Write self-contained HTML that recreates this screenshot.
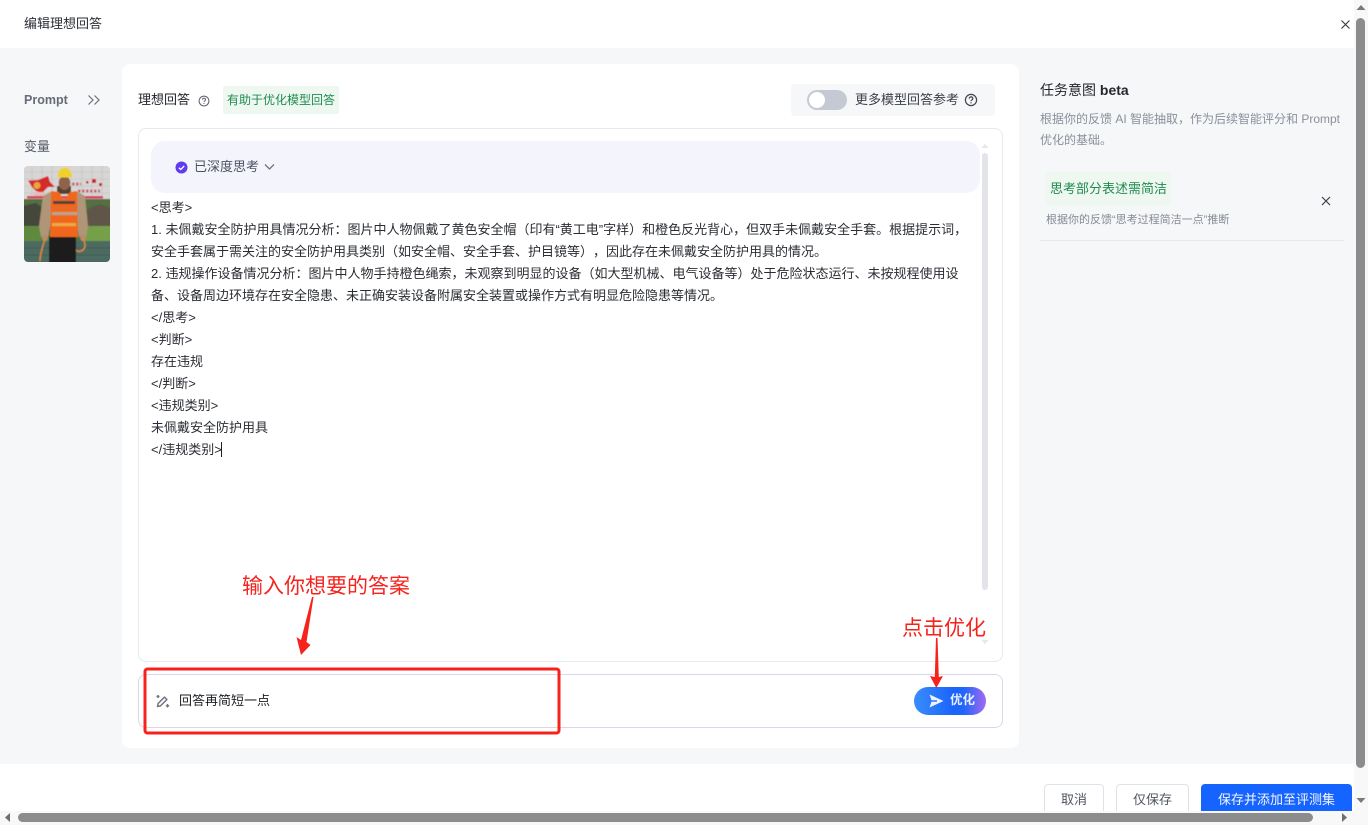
<!DOCTYPE html>
<html lang="zh"><head><meta charset="utf-8"><title>编辑理想回答</title>
<style>
html,body{margin:0;padding:0;width:1368px;height:825px;overflow:hidden;background:#fff}
body{position:relative;font-family:"Liberation Sans","Noto Sans CJK SC",sans-serif;font-size:13px;color:#1c1f23;text-spacing-trim:space-all;font-feature-settings:"palt" 0,"chws" 0,"halt" 0}
.a{position:absolute;white-space:nowrap}
.t{position:absolute;white-space:nowrap;left:151px;line-height:22px;height:22px;font-size:13px;color:#2a2d33}
.btn{position:absolute;top:784px;height:32px;box-sizing:border-box;border:1px solid #dfe2e8;border-radius:4px;background:#fff;text-align:center;line-height:29px;color:#4f5560;font-size:13px}
</style></head><body>

<div class="a" style="left:0;top:48px;width:1354px;height:716px;background:#f6f7f9"></div>
<div class="a" style="left:24px;top:15px;line-height:18px;color:#2b2f36">编辑理想回答</div>
<svg class="a" style="left:1340px;top:19px" width="11" height="11" viewBox="0 0 11 11"><path d="M1.500 1.500l8 8M9.500 1.500l-8 8" stroke="#3a3f4a" stroke-width="1.200" fill="none"/></svg>

<div class="a" style="left:24px;top:91px;line-height:18px;font-size:12.500px;font-weight:700;color:#666b76">Prompt</div>
<svg class="a" style="left:87px;top:94px" width="14" height="12" viewBox="0 0 14 12"><path d="M1.500 1.500L6 6l-4.500 4.500M7.500 1.500L12 6l-4.500 4.500" stroke="#6b707b" stroke-width="1.200" fill="none"/></svg>
<div class="a" style="left:24px;top:138px;line-height:18px;color:#565b66">变量</div>

<svg class="a" style="left:24px;top:166px;border-radius:4px" width="86" height="96" viewBox="0 0 86 96">
<defs><filter id="b" x="-5%" y="-5%" width="110%" height="110%"><feGaussianBlur stdDeviation=".4"/></filter></defs>
<rect width="86" height="96" fill="#d8d6d5"/>
<g filter="url(#b)">
<rect x="-2" y="-2" width="90" height="100" fill="#d8d6d5"/>
<path d="M-2 6h90M-2 13h90M-2 20h90M-2 27h90M8 0v32M18 0v32M28 0v32M58 0v32M68 0v32M78 0v32" stroke="#bfbebe" stroke-width=".6"/>
<path d="M4 14.500L14 14 24 10 26 16 31 21 24 21 18 27 12 25 8 21z" fill="#d62b2b"/>
<circle cx="13" cy="19.500" r="3.500" fill="#e8a53c"/>
<rect x="3" y="30" width="76" height="2.600" fill="#d8415e"/>
<rect x="10" y="26" width="11" height="4" fill="#e4bcbc"/>
<path d="M48 18h9M54 25h22" stroke="#c65a68" stroke-width="2.800" stroke-dasharray="2.500 1.500"/>
<rect x="62" y="15" width="2.500" height="2.500" fill="#c22"/><rect x="68" y="13" width="4" height="4" fill="#c22"/><rect x="75" y="17" width="3" height="3" fill="#c22"/>
<rect x="-2" y="33" width="90" height="43" fill="#55703f"/>
<path d="M-2 40L12 37 22 44V62H-2z" fill="#45473a"/>
<path d="M62 44L75 38 88 42V60H62z" fill="#5f5648"/>
<rect x="-2" y="60" width="27" height="16" fill="#5f8a3e"/>
<rect x="58" y="60" width="30" height="16" fill="#74a049"/>
<rect x="-2" y="75" width="90" height="23" fill="#4d6b60"/>
<path d="M-2 82h90M-2 89h90" stroke="#3e5a50" stroke-width=".7"/>
<path d="M28 25L19 30 15 60 17 71 24 71 28 50z" fill="#b09679"/>
<path d="M52 25L61 30 64 60 62 71 55 71 52 50z" fill="#b09679"/>
<ellipse cx="21" cy="72" rx="2.800" ry="3" fill="#b88a6c"/><ellipse cx="59" cy="72" rx="2.800" ry="3" fill="#b88a6c"/>
<rect x="25" y="70" width="27" height="28" fill="#1c1b1d"/>
<rect x="33" y="20" width="14" height="8" fill="#55402f"/>
<path d="M27 25L35 26 40 34 46 26 53 25 54 71 26 71z" fill="#f0661c"/>
<rect x="29" y="35" width="22" height="3" fill="#4a4340"/>
<rect x="28" y="46" width="25" height="3" fill="#b5a48e"/>
<rect x="28" y="57" width="24" height="3.200" fill="#eda844"/>
<ellipse cx="40.500" cy="17" rx="5.800" ry="7" fill="#8f6248"/>
<path d="M33.500 11.500C33.500 5 36.500 1.500 41 1.500S48 5 48 11.500z" fill="#efd12f"/>
<path d="M21 73c-2 7-5 14-5 22M59 73c3 5 3 10-2 12-2 1-4 0-5-1" stroke="#dc8a35" stroke-width="1.500" fill="none"/>
</g></svg>

<div class="a" style="left:122px;top:64px;width:897px;height:684px;background:#fff;border-radius:8px"></div>

<div class="a" style="left:138px;top:91px;line-height:18px;color:#23262c">理想回答</div>
<svg class="a" style="left:198px;top:95px" width="12" height="12" viewBox="0 0 12 12"><circle cx="6" cy="6" r="4.900" stroke="#5b606b" fill="none"/><path d="M4.500 4.800c0-2 3-2 3 0 0 1.100-1.500 1.100-1.500 2.200" stroke="#5b606b" fill="none"/><rect x="5.500" y="8" width="1" height="1" fill="#5b606b"/></svg>
<div class="a" style="left:223px;top:86px;width:116px;height:28px;background:#eef8f1;border-radius:2px;line-height:29px;text-align:center;font-size:12px;color:#208a50">有助于优化模型回答</div>

<div class="a" style="left:791px;top:84px;width:204px;height:32px;background:#f6f7f9;border-radius:4px"></div>
<div class="a" style="left:807px;top:90px;width:40px;height:20px;background:#c5c9d4;border-radius:10px"></div>
<div class="a" style="left:809px;top:92px;width:16px;height:16px;background:#fff;border-radius:50%"></div>
<div class="a" style="left:855px;top:91px;line-height:18px;color:#3c4049">更多模型回答参考</div>
<svg class="a" style="left:964px;top:93px" width="14" height="14" viewBox="0 0 14 14"><circle cx="7" cy="7" r="5.600" stroke="#41454e" stroke-width="1.200" fill="none"/><path d="M5.200 5.600c0-2.300 3.600-2.300 3.600 0 0 1.300-1.800 1.300-1.800 2.500" stroke="#41454e" stroke-width="1.200" fill="none"/><rect x="6.400" y="9.200" width="1.200" height="1.200" fill="#41454e"/></svg>

<div class="a" style="left:138px;top:128px;width:865px;height:534px;box-sizing:border-box;border:1px solid #e8e9ee;border-radius:8px;background:#fff"></div>
<div class="a" style="left:151px;top:141px;width:829px;height:52px;background:#f4f4fd;border-radius:14px"></div>
<svg class="a" style="left:175px;top:161px" width="13" height="13" viewBox="0 0 13 13"><circle cx="6.500" cy="6.500" r="6" fill="#5f3cf0"/><path d="M3.800 6.800l2 1.700 3.400-3.500" stroke="#fff" stroke-width="1.300" fill="none"/></svg>
<div class="a" style="left:194px;top:158px;line-height:18px;color:#4c5260">已深度思考</div>
<svg class="a" style="left:264px;top:163px" width="11" height="8" viewBox="0 0 11 8"><path d="M1 1.500l4.500 4.500L10 1.500" stroke="#6e7380" stroke-width="1.300" fill="none"/></svg>

<div class="t" style="top:197px">&lt;思考&gt;</div>
<div class="t" style="top:219px">1. 未佩戴安全防护用具情况分析：图片中人物佩戴了黄色安全帽（印有“黄工电”字样）和橙色反光背心，但双手未佩戴安全手套。根据提示词，</div>
<div class="t" style="top:241px">安全手套属于需关注的安全防护用具类别（如安全帽、安全手套、护目镜等），因此存在未佩戴安全防护用具的情况。</div>
<div class="t" style="top:263px">2. 违规操作设备情况分析：图片中人物手持橙色绳索，未观察到明显的设备（如大型机械、电气设备等）处于危险状态运行、未按规程使用设</div>
<div class="t" style="top:285px">备、设备周边环境存在安全隐患、未正确安装设备附属安全装置或操作方式有明显危险隐患等情况。</div>
<div class="t" style="top:307px">&lt;/思考&gt;</div>
<div class="t" style="top:329px">&lt;判断&gt;</div>
<div class="t" style="top:351px">存在违规</div>
<div class="t" style="top:373px">&lt;/判断&gt;</div>
<div class="t" style="top:395px">&lt;违规类别&gt;</div>
<div class="t" style="top:417px">未佩戴安全防护用具</div>
<div class="t" style="top:439px">&lt;/违规类别&gt;</div>
<div class="a" style="left:221px;top:442px;width:1px;height:15px;background:#1c1f23"></div>

<svg class="a" style="left:981px;top:143px" width="8" height="506" viewBox="0 0 8 506"><path d="M4 1l3.500 4h-7z" fill="#e6e7ec"/><path d="M0.500 497h7l-3.500 4z" fill="#e6e7ec"/></svg>
<div class="a" style="left:982px;top:153px;width:6px;height:437px;background:#e3e4ea;border-radius:3px"></div>

<div class="a" style="left:138px;top:674px;width:865px;height:54px;box-sizing:border-box;border:1px solid #ddd6e8;border-radius:8px;background:#fff"></div>
<svg class="a" style="left:155px;top:693px" width="16" height="16" viewBox="0 0 16 16"><path d="M2.500 13.500l.6-3 6.400-6.400 2.400 2.400-6.400 6.400z" stroke="#6f7480" stroke-width="1.500" fill="none" stroke-linejoin="round"/><path d="M1.500 3.500h3M3 2v3M12.500 11v3.500M10.800 12.800h3.400" stroke="#6f7480" stroke-width="1.400"/></svg>
<div class="a" style="left:179px;top:692px;line-height:18px;color:#1c1f23">回答再简短一点</div>
<div class="a" style="left:914px;top:687px;width:72px;height:28px;border-radius:14px;background:linear-gradient(90deg,#3a8dfb 0%,#1a63fb 55%,#2266fb 70%,#a569f0 100%)"></div>
<svg class="a" style="left:929px;top:694px" width="15" height="14" viewBox="0 0 15 14"><path d="M0.500 0.500L14.500 7 0.500 13.500 2.500 7.800H8V6.200H2.500z" fill="#eef3ff"/></svg>
<div class="a" style="left:950px;top:692px;line-height:17px;font-size:12.500px;font-weight:700;color:#e8eefc">优化</div>

<div class="a" style="left:1040px;top:81px;line-height:18px;font-size:14px;color:#23262c">任务意图 <b>beta</b></div>
<div class="a" style="left:1040px;top:110px;line-height:18px;font-size:12px;color:#8a8f9a">根据你的反馈 AI 智能抽取，作为后续智能评分和 Prompt</div>
<div class="a" style="left:1040px;top:131px;line-height:18px;font-size:12px;color:#8a8f9a;margin-top:-0px">优化的基础。</div>
<div class="a" style="left:1046px;top:172px;width:125px;height:34px;background:#eef8f1;border-radius:2px"></div>
<div class="a" style="left:1050px;top:180px;line-height:18px;color:#208a50">思考部分表述需简洁</div>
<div class="a" style="left:1046px;top:212px;line-height:16px;font-size:11px;color:#858a95">根据你的反馈“思考过程简洁一点”推断</div>
<svg class="a" style="left:1321px;top:196px" width="10" height="10" viewBox="0 0 10 10"><path d="M1 1l8 8M9 1L1 9" stroke="#3a3f4a" stroke-width="1.200" fill="none"/></svg>
<div class="a" style="left:1040px;top:240px;width:304px;height:1px;background:#e8e9ee"></div>

<div class="btn" style="left:1044px;width:60px">取消</div>
<div class="btn" style="left:1116px;width:73px">仅保存</div>
<div class="btn" style="left:1201px;width:151px;background:#1664ff;border-color:#1664ff;color:#f4f7ff">保存并添加至评测集</div>

<div class="a" style="left:242px;top:573px;line-height:28px;font-size:21px;color:#f5231c">输入你想要的答案</div>
<div class="a" style="left:902px;top:615px;line-height:28px;font-size:21px;color:#f5231c">点击优化</div>
<svg class="a" style="left:0;top:0;pointer-events:none" width="1368" height="825" viewBox="0 0 1368 825">
<rect x="145" y="669" width="414" height="64" rx="2.500" fill="none" stroke="#f5231c" stroke-width="3"/>
<path d="M313.500 597L306.500 642 310.500 645 301 655 296.500 637 301 640 312 597z" fill="#f5231c"/>
<path d="M937.500 638L938.800 677 943 676 936.300 688 930 676 934.800 677 936 638z" fill="#f5231c"/>
</svg>

<div class="a" style="left:1354px;top:0;width:14px;height:825px;background:#f8f8f8"></div>
<div class="a" style="left:0;top:811px;width:1368px;height:14px;background:#f8f8f8"></div>
<div class="a" style="left:1356px;top:18px;width:9px;height:750px;background:#8c8c8c;border-radius:5px"></div>
<div class="a" style="left:18px;top:813px;width:1295px;height:9px;background:#8c8c8c;border-radius:5px"></div>
<svg class="a" style="left:0;top:0" width="1368" height="825" viewBox="0 0 1368 825">
<path d="M1361 5l4.500 5h-9z" fill="#7a7a7a"/><path d="M1356.500 798h9l-4.500 5z" fill="#7a7a7a"/>
<path d="M5 817.500l5-4.500v9z" fill="#6e6e6e"/><path d="M1347 817.500l-5-4.500v9z" fill="#6e6e6e"/>
</svg>
</body></html>
